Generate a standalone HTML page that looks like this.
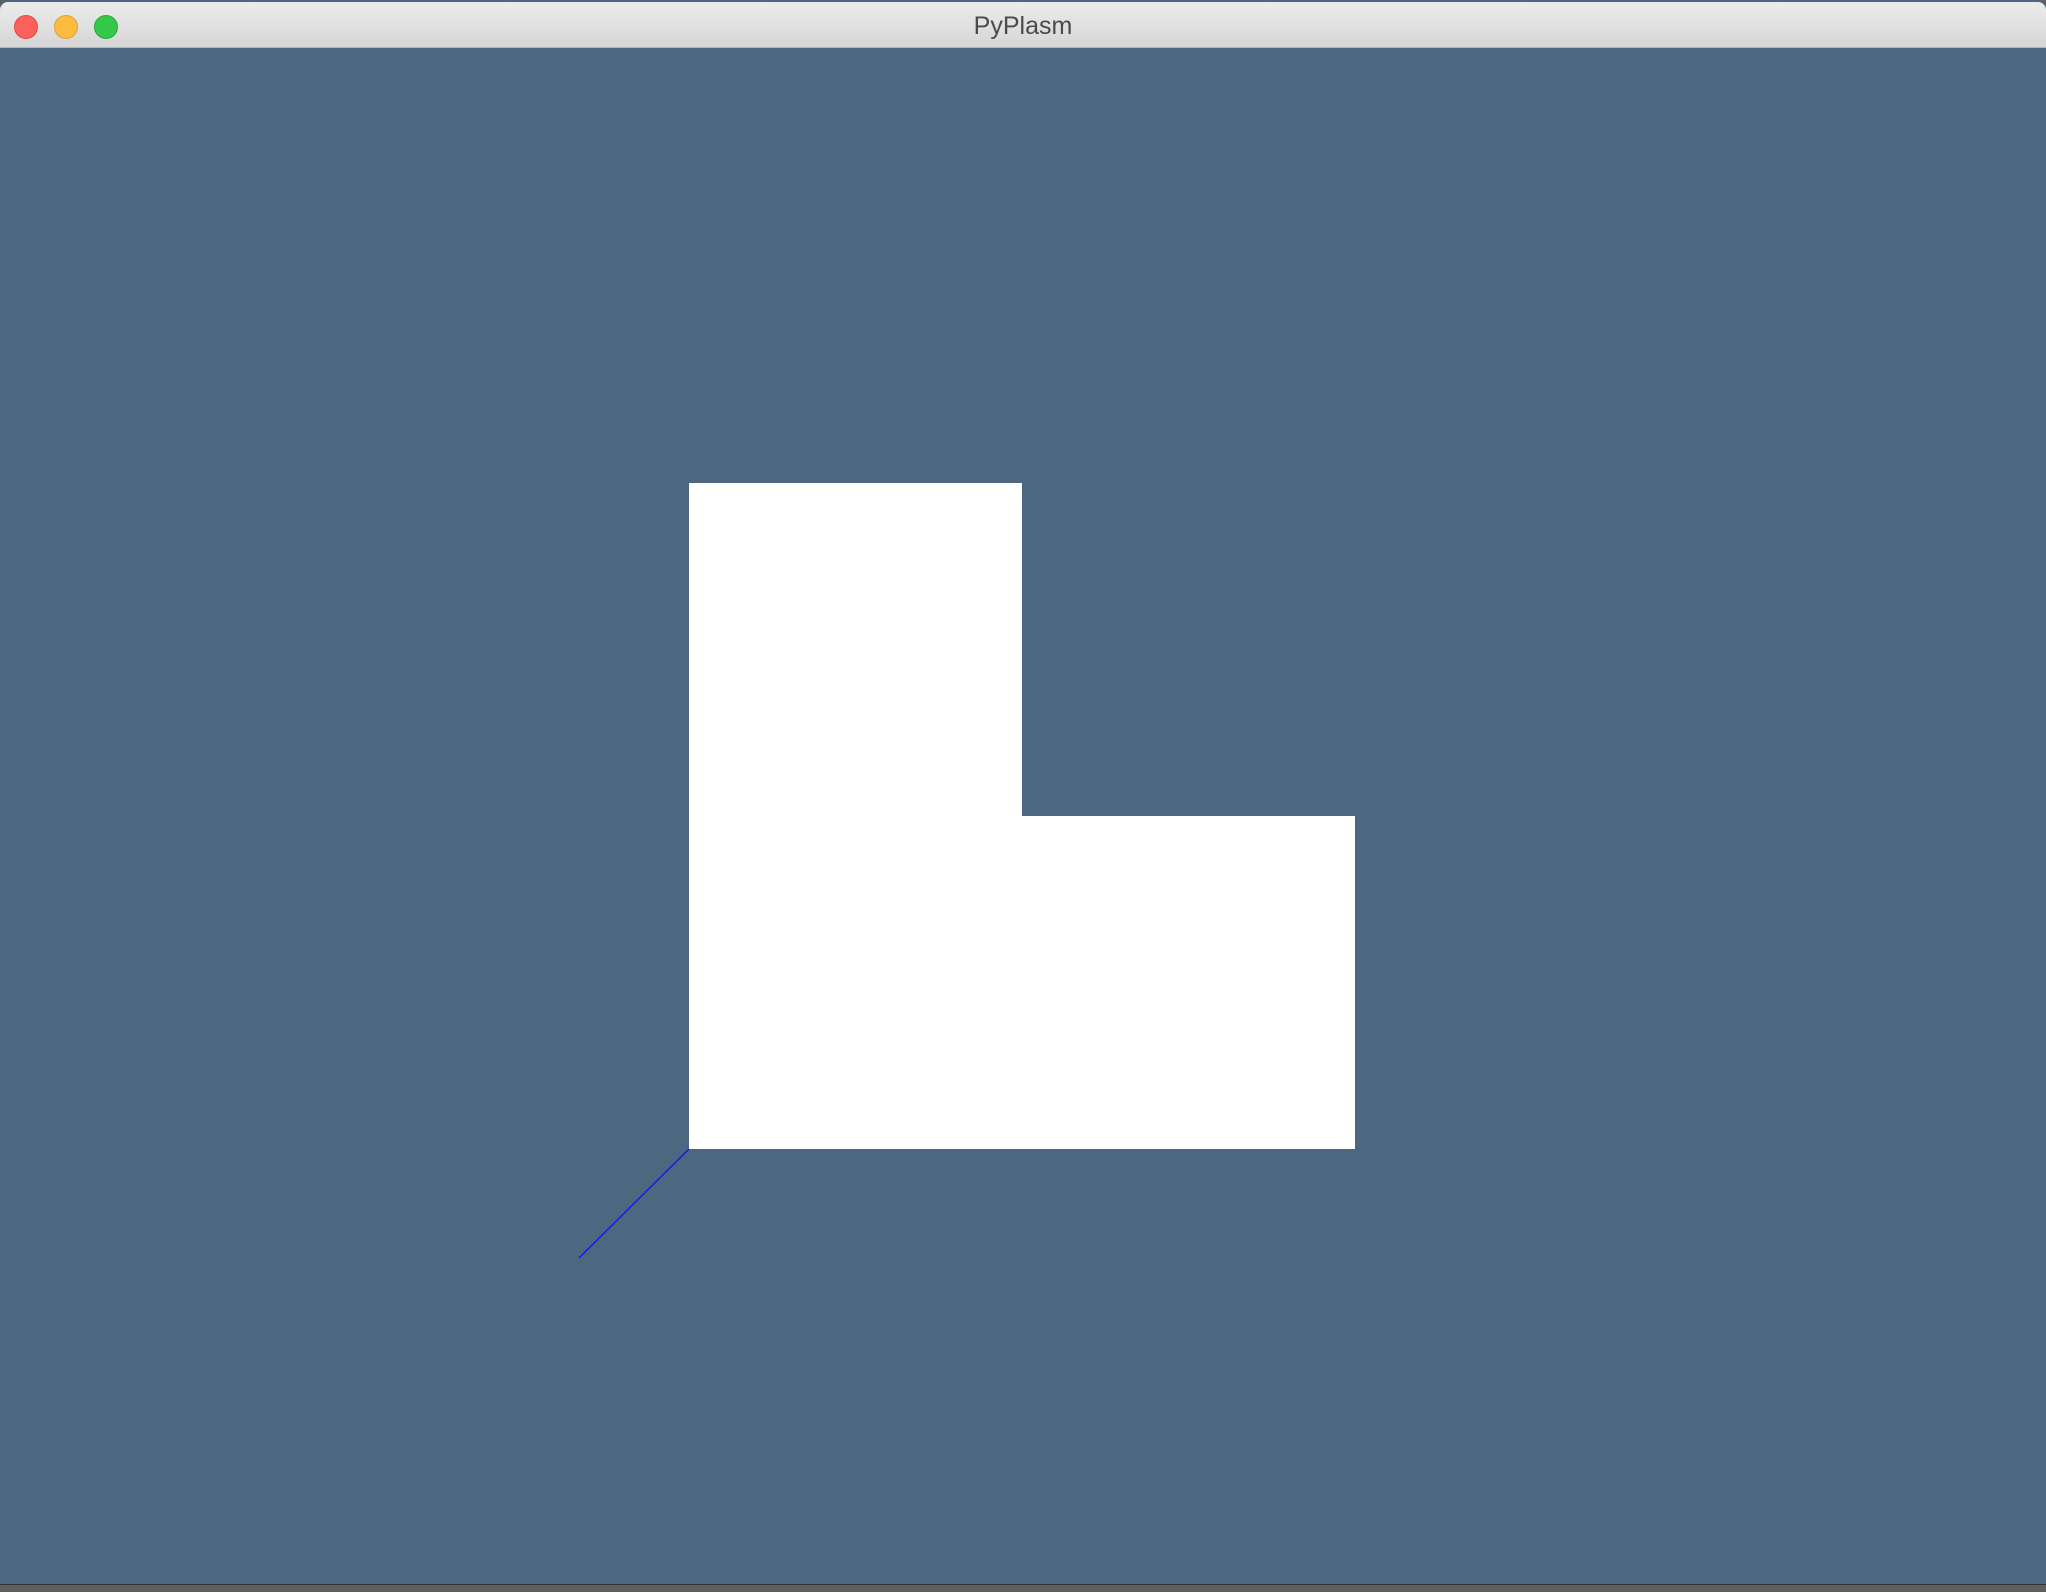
<!DOCTYPE html>
<html><head><style>
html,body{margin:0;padding:0;width:2046px;height:1592px;overflow:hidden;background:#5e5e5e;position:relative}
#win{position:absolute;left:0;top:0;width:2046px;height:1584px;background:#4c677f;border-radius:8px 8px 0 0;overflow:hidden;border-bottom:1px solid #333}
#bar{position:absolute;left:0;top:2px;width:2046px;height:45px;background:linear-gradient(#ececec,#d6d6d6);border-bottom:1px solid #b5b5b5;border-radius:8px 8px 0 0}
.c{position:absolute;top:13px;width:24px;height:24px;border-radius:50%}
#t{position:absolute;left:0;right:0;top:10px;text-align:center;font:25px "Liberation Sans",sans-serif;color:#4a4a4a}
</style></head><body>
<div id="win">
<div id="bar">
<div class="c" style="left:14px;background:#fc605c;border:1px solid #e24b44;box-sizing:border-box"></div>
<div class="c" style="left:54px;background:#fdbc40;border:1px solid #dea236;box-sizing:border-box"></div>
<div class="c" style="left:94px;background:#34c84a;border:1px solid #27aa35;box-sizing:border-box"></div>
<div id="t">PyPlasm</div>
</div>
<svg width="2046" height="1584" style="position:absolute;left:0;top:0">
<polygon points="689,483 1022,483 1022,816 1355,816 1355,1149 689,1149" fill="#fff"/>
<line x1="689" y1="1149" x2="579" y2="1258" stroke="#1010ff" stroke-width="1.3"/>
</svg>
</div>
</body></html>
